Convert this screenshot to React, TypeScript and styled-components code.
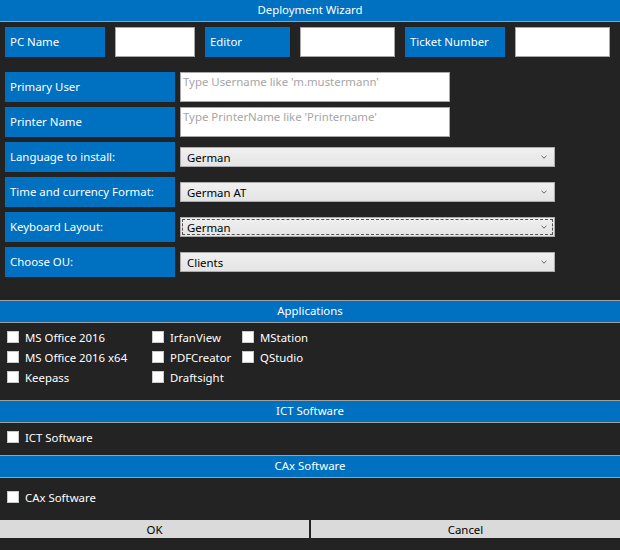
import React from "react";
import styled, { createGlobalStyle } from "styled-components";

const GlobalStyle = createGlobalStyle`
  html, body {
    margin: 0;
    padding: 0;
    background-color: #232323;
  }
  body {
    font-family: "Noto Sans", "Open Sans", sans-serif;
    font-size: 11.4px;
  }
`;

const Window = styled.div`
  width: 620px;
  height: 550px;
  display: flex;
  flex-direction: column;
  background-color: #232323;
  color: #ffffff;
  overflow: hidden;
`;

const TitleBar = styled.div`
  height: 21px;
  line-height: 20px;
  text-align: center;
  background-color: #0070c0;
  border-bottom: 1px solid #a0a0a0;
  color: #ffffff;
`;

const TopRow = styled.div`
  display: flex;
  gap: 10px;
  padding: 5px 5px 0 5px;
  height: 30px;
`;

const Label = styled.div<{ $width: number }>`
  width: ${(p) => p.$width}px;
  height: 30px;
  flex-shrink: 0;
  display: flex;
  align-items: center;
  padding: 0 0 2px 5px;
  box-sizing: border-box;
  background-color: #0070c0;
  color: #ffffff;
`;

const Box = styled.div<{ $width: number }>`
  width: ${(p) => p.$width}px;
  height: 30px;
  flex-shrink: 0;
  box-sizing: border-box;
  background-color: #ffffff;
  border: 1px solid #a8a8a8;
`;

const Form = styled.div`
  display: flex;
  flex-direction: column;
  gap: 5px;
  padding: 15px 5px 0 5px;
  height: 243px;
  box-sizing: border-box;
`;

const FormRow = styled.div`
  display: flex;
  align-items: center;
  gap: 5px;
  height: 30px;
`;

const TextField = styled.div`
  width: 270px;
  height: 30px;
  box-sizing: border-box;
  background-color: #ffffff;
  border: 1px solid #a8a8a8;
  padding: 1px 0 0 2px;
  color: #a6a6a6;
  line-height: 15px;
`;

const Select = styled.div<{ $focused?: boolean }>`
  width: 375px;
  height: 20px;
  box-sizing: border-box;
  display: flex;
  align-items: center;
  justify-content: space-between;
  padding: 0 7px 0 6px;
  background: linear-gradient(#f0f0f0, #e4e4e4);
  border: 1px solid #acacac;
  color: #000000;
  outline: ${(p) => (p.$focused ? "1px dashed #555555" : "none")};
  outline-offset: -3px;
`;

const SectionHeader = styled.div`
  height: 21px;
  line-height: 20px;
  text-align: center;
  background-color: #0070c0;
  border-top: 1px solid #a0a0a0;
  border-bottom: 1px solid #a0a0a0;
  color: #ffffff;
`;

const SectionBody = styled.div<{ $height: number; $top: number }>`
  height: ${(p) => p.$height}px;
  box-sizing: border-box;
  padding: ${(p) => p.$top}px 0 0 7px;
`;

const AppGrid = styled.div`
  display: grid;
  grid-template-columns: 145px 90px auto;
  grid-auto-rows: 20px;
`;

const Check = styled.label`
  display: flex;
  align-items: center;
  gap: 6px;
  height: 20px;
  color: #ffffff;
  white-space: nowrap;
`;

const CheckBox = styled.span`
  width: 12px;
  height: 12px;
  box-sizing: border-box;
  background-color: #ffffff;
  border: 1px solid #c8c8c8;
  flex-shrink: 0;
`;

const ButtonBar = styled.div`
  display: grid;
  grid-template-columns: 309px 1fr;
  gap: 2px;
  height: 18px;
`;

const Button = styled.button`
  height: 18px;
  padding: 0;
  border: none;
  background-color: #dadada;
  color: #000000;
  font-family: inherit;
  font-size: 11.4px;
  line-height: 19px;
`;

const Chevron = () => (
  <svg width="6" height="4" viewBox="0 0 6 4">
    <path d="M0.5 0.8 L3 3.2 L5.5 0.8" fill="none" stroke="#666666" strokeWidth="1" />
  </svg>
);

const CheckItem = ({ text }: { text: string }) => (
  <Check>
    <CheckBox />
    {text}
  </Check>
);

const selects = [
  { label: "Language to install:", value: "German" },
  { label: "Time and currency Format:", value: "German AT" },
  { label: "Keyboard Layout:", value: "German", focused: true },
  { label: "Choose OU:", value: "Clients" },
];

const apps = [
  "MS Office 2016",
  "IrfanView",
  "MStation",
  "MS Office 2016 x64",
  "PDFCreator",
  "QStudio",
  "Keepass",
  "Draftsight",
];

const App = (): JSX.Element => {
  return (
    <Window>
      <GlobalStyle />
      <TitleBar>Deployment Wizard</TitleBar>
      <TopRow>
        <Label $width={100}>PC Name</Label>
        <Box $width={80} />
        <Label $width={85}>Editor</Label>
        <Box $width={95} />
        <Label $width={100}>Ticket Number</Label>
        <Box $width={95} />
      </TopRow>
      <Form>
        <FormRow>
          <Label $width={170}>Primary User</Label>
          <TextField>Type Username like 'm.mustermann'</TextField>
        </FormRow>
        <FormRow>
          <Label $width={170}>Printer Name</Label>
          <TextField>Type PrinterName like 'Printername'</TextField>
        </FormRow>
        {selects.map((s) => (
          <FormRow key={s.label}>
            <Label $width={170}>{s.label}</Label>
            <Select $focused={s.focused}>
              <span>{s.value}</span>
              <Chevron />
            </Select>
          </FormRow>
        ))}
      </Form>
      <SectionHeader>Applications</SectionHeader>
      <SectionBody $height={77} $top={4}>
        <AppGrid>
          {apps.map((a) => (
            <CheckItem key={a} text={a} />
          ))}
        </AppGrid>
      </SectionBody>
      <SectionHeader>ICT Software</SectionHeader>
      <SectionBody $height={32} $top={4}>
        <CheckItem text="ICT Software" />
      </SectionBody>
      <SectionHeader>CAx Software</SectionHeader>
      <SectionBody $height={42} $top={9}>
        <CheckItem text="CAx Software" />
      </SectionBody>
      <ButtonBar>
        <Button>OK</Button>
        <Button>Cancel</Button>
      </ButtonBar>
    </Window>
  );
};

export default App;
